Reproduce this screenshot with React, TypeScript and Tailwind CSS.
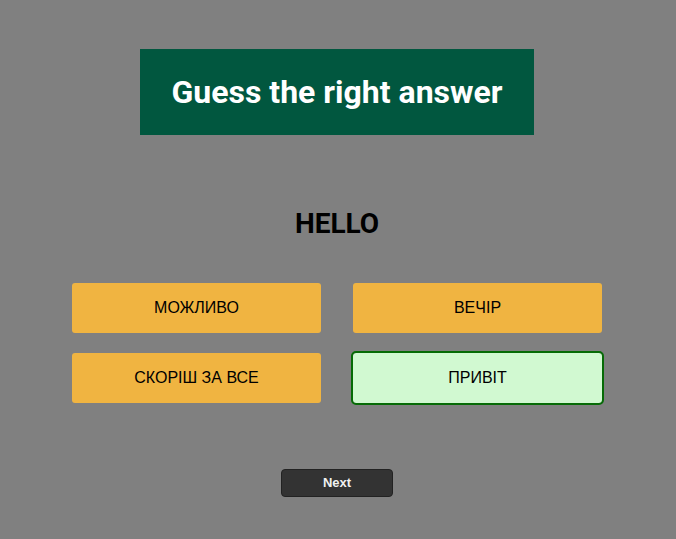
const answers = [
  { label: "МОЖЛИВО", correct: false },
  { label: "ВЕЧІР", correct: false },
  { label: "СКОРІШ ЗА ВСЕ", correct: false },
  { label: "ПРИВІТ", correct: true },
];

function AnswerButton({ label, correct }: { label: string; correct: boolean }) {
  return (
    <button
      className={
        correct
          ? "h-[50px] rounded-[3px] bg-[#d1f9d1] text-[16px] text-black font-['Liberation_Sans',Arial,sans-serif] outline-2 outline-[#066b06]"
          : "h-[50px] rounded-[3px] bg-[#f0b441] text-[16px] text-black font-['Liberation_Sans',Arial,sans-serif]"
      }
    >
      {label}
    </button>
  );
}

export default function App() {
  return (
    <div className="min-h-[539px] w-full bg-[#808080] flex flex-col items-center pt-[49px] font-['Roboto',sans-serif]">
      <div className="w-[394px] h-[86px] bg-[#01573f] flex items-center justify-center -ml-[2px]">
        <h1 className="text-white font-bold text-[32px] leading-none">Guess the right answer</h1>
      </div>

      <h2 className="mt-[73px] text-black font-bold text-[28px] leading-[32px] -ml-[2px]">HELLO</h2>

      <div className="mt-[43px] grid grid-cols-[249px_249px] gap-x-[32px] gap-y-[20px] -ml-[2px]">
        {answers.map((a) => (
          <AnswerButton key={a.label} label={a.label} correct={a.correct} />
        ))}
      </div>

      <button className="mt-[66px] w-[112px] h-[28px] rounded-[4px] bg-[#333333] border border-[#222] text-[#f0f0f0] font-bold text-[13px] font-['Liberation_Sans',Arial,sans-serif] -ml-[2px]">
        Next
      </button>
    </div>
  );
}
